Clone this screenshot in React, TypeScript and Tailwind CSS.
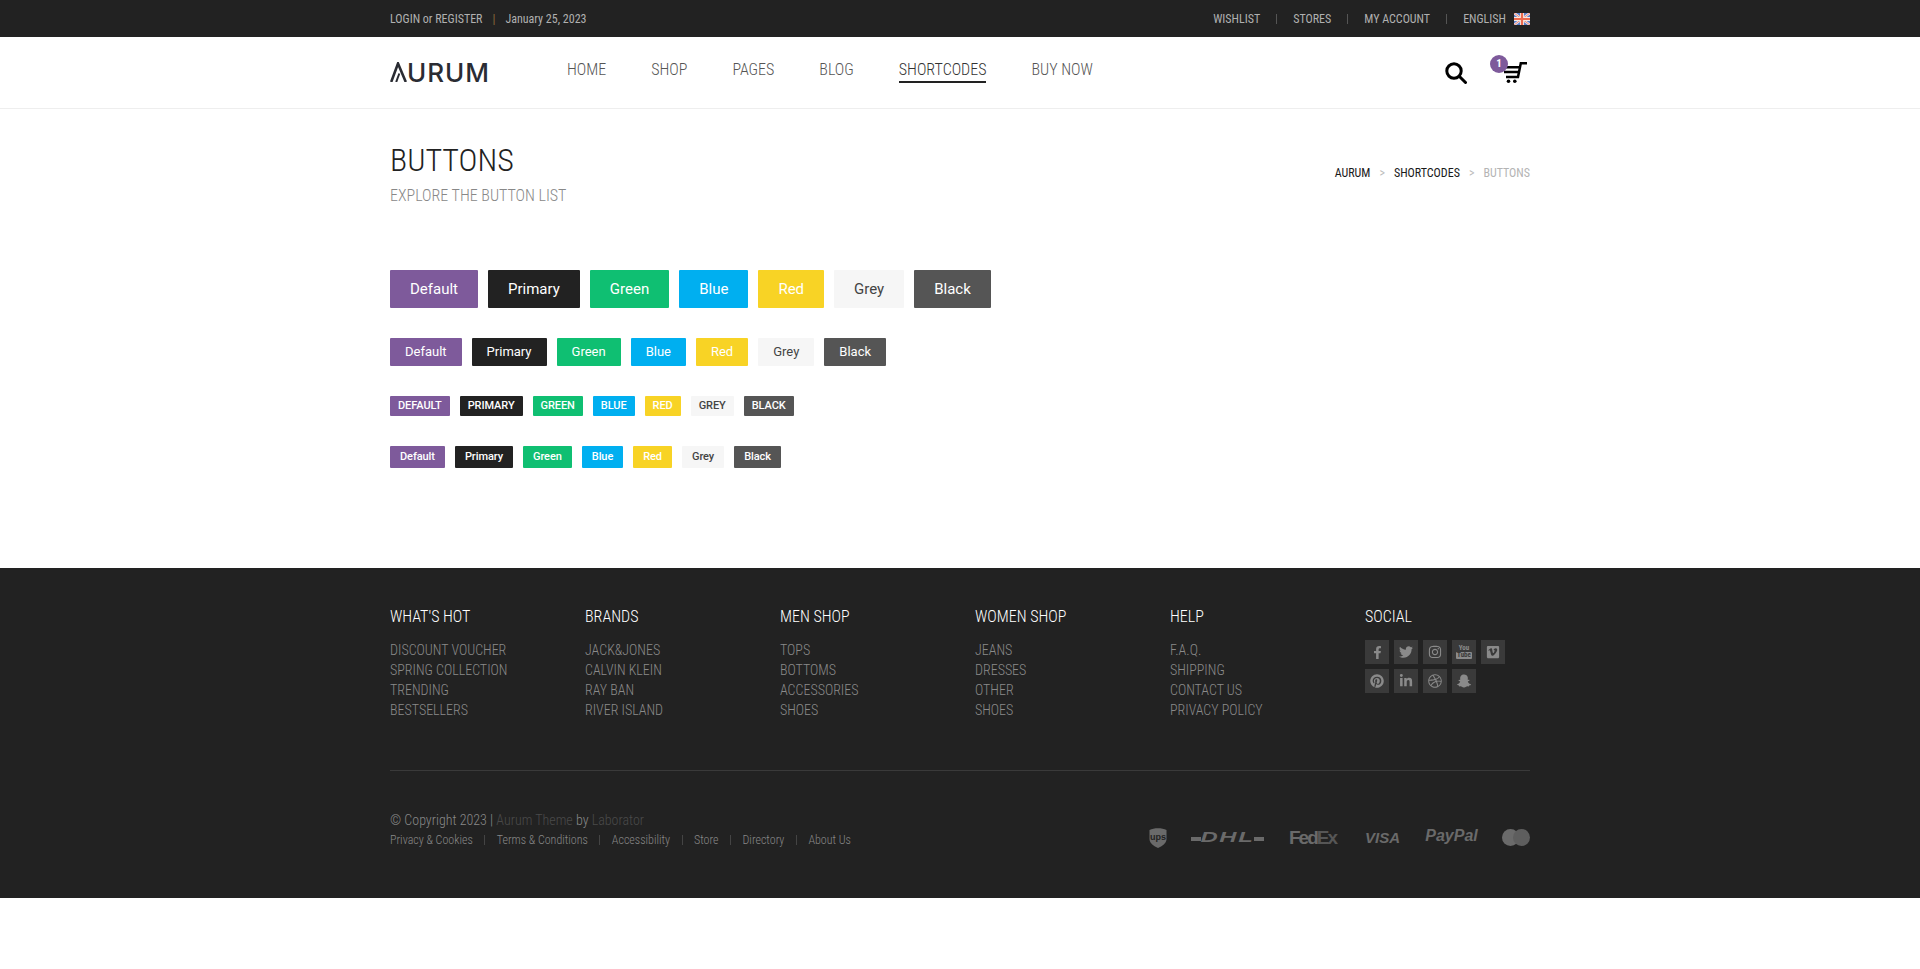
import { FaFacebookF, FaTwitter, FaInstagram, FaVimeo, FaPinterest, FaLinkedinIn, FaDribbble, FaSnapchatGhost } from 'react-icons/fa'

const cond = "font-['Roboto',sans-serif] [font-stretch:75%]"

type Btn = { label: string; cls: string }

const COLORS: Btn[] = [
  { label: 'Default', cls: 'bg-[#7e5a9b] text-white' },
  { label: 'Primary', cls: 'bg-[#222222] text-white' },
  { label: 'Green', cls: 'bg-[#0fbf72] text-white' },
  { label: 'Blue', cls: 'bg-[#00aff0] text-white' },
  { label: 'Red', cls: 'bg-[#f8d325] text-white' },
  { label: 'Grey', cls: 'bg-[#f6f6f6] text-[#444444]' },
  { label: 'Black', cls: 'bg-[#555555] text-white' },
]

const FOOTER = [
  { title: "WHAT'S HOT", links: ['DISCOUNT VOUCHER', 'SPRING COLLECTION', 'TRENDING', 'BESTSELLERS'] },
  { title: 'BRANDS', links: ['JACK&JONES', 'CALVIN KLEIN', 'RAY BAN', 'RIVER ISLAND'] },
  { title: 'MEN SHOP', links: ['TOPS', 'BOTTOMS', 'ACCESSORIES', 'SHOES'] },
  { title: 'WOMEN SHOP', links: ['JEANS', 'DRESSES', 'OTHER', 'SHOES'] },
  { title: 'HELP', links: ['F.A.Q.', 'SHIPPING', 'CONTACT US', 'PRIVACY POLICY'] },
]

function ButtonRow({ size, mt, upper }: { size: string; mt: string; upper?: boolean }) {
  return (
    <div className={`flex gap-[10px] ${mt}`}>
      {COLORS.map(b => (
        <div key={b.label} className={`flex items-center justify-center rounded-[1px] ${size} ${b.cls}`}>
          {upper ? b.label.toUpperCase() : b.label}
        </div>
      ))}
    </div>
  )
}

function Flag() {
  return (
    <svg width="16" height="12" viewBox="0 0 16 12" className="ml-[8px]">
      <rect width="16" height="12" fill="#5b7fc9" />
      <path d="M0 0L16 12M16 0L0 12" stroke="#f3e6e6" strokeWidth="2.4" />
      <path d="M0 0L16 12M16 0L0 12" stroke="#e8705f" strokeWidth="0.8" />
      <path d="M8 0V12M0 6H16" stroke="#f5e9e4" strokeWidth="4" />
      <path d="M8 0V12M0 6H16" stroke="#ee6a4e" strokeWidth="2.2" />
    </svg>
  )
}

function Cart() {
  return (
    <svg width="24" height="21" viewBox="0 0 24 21" fill="none" stroke="#000" strokeWidth="2.5" className="block">
      <path d="M24 1.2H17.8L15 15H3" />
      <path d="M0 5.2H16.5M1 10H15.5" />
      <circle cx="5.5" cy="19.2" r="1.8" fill="#000" stroke="none" />
      <circle cx="11.8" cy="19.2" r="1.8" fill="#000" stroke="none" />
    </svg>
  )
}

function YoutubeOld() {
  return (
    <div className="flex flex-col items-center font-['Roboto',sans-serif] text-[7px] font-bold leading-[7px] text-[#8a8a8a] [font-stretch:75%]">
      <span>You</span>
      <span className="rounded-[1px] bg-[#8a8a8a] px-[1px] text-[#3a3a3a]">Tube</span>
    </div>
  )
}

const SOCIAL = [
  <FaFacebookF key="fb" size={13} />,
  <FaTwitter key="tw" size={14} />,
  <FaInstagram key="ig" size={14} />,
  <YoutubeOld key="yt" />,
  <FaVimeo key="vi" size={14} />,
  <FaPinterest key="pi" size={14} />,
  <FaLinkedinIn key="li" size={14} />,
  <FaDribbble key="dr" size={14} />,
  <FaSnapchatGhost key="sc" size={14} />,
]

function PaymentLogos() {
  return (
    <div className="mt-[14px] flex h-[21px] items-center font-['Liberation_Sans',sans-serif] font-bold leading-none text-[#6a6a6a] [font-stretch:100%]">
      <svg width="18" height="21" viewBox="0 0 18 21">
        <path d="M0.5 3C5 0.5 13 0.5 17.5 3V12C17.5 16.5 13 19 9 21C5 19 0.5 16.5 0.5 12Z" fill="#6a6a6a" />
        <text x="9" y="13" textAnchor="middle" fontSize="9" fontWeight="700" fill="#222222">ups</text>
      </svg>
      <div className="ml-[24px] flex h-[10px] w-[73px] items-end">
        <span className="mb-[1px] h-[4px] w-[10px] bg-[#6a6a6a]" />
        <span className="flex-1 text-center text-[14px] italic leading-[10px] tracking-[1px] [transform:scaleX(1.7)]">DHL</span>
        <span className="mb-[1px] h-[4px] w-[10px] bg-[#6a6a6a]" />
      </div>
      <span className="ml-[25px] w-[45px] whitespace-nowrap text-[19px] tracking-[-2px]">Fed<span className="text-[#565656]">Ex</span></span>
      <span className="ml-[30px] w-[37px] text-center text-[15px] italic">VISA</span>
      <span className="ml-[24px] w-[53px] -translate-y-[1px] text-center text-[16px] italic">PayPal</span>
      <div className="ml-[24px] flex w-[28px] items-center">
        <span className="h-[17px] w-[17px] shrink-0 rounded-full bg-[#6a6a6a]" />
        <span className="-ml-[6px] h-[17px] w-[17px] shrink-0 rounded-full bg-[#5e5e5e]" />
      </div>
    </div>
  )
}

export default function App() {
  return (
    <div className={`min-h-[969px] bg-white ${cond}`}>
      <div className="h-[37px] bg-[#222222] text-[12px] text-[#b0b0b0]">
        <div className="mx-auto flex h-full w-[1140px] items-center justify-between">
          <div className="flex items-center">
            <span>LOGIN or REGISTER</span>
            <span className="mx-[10px] text-[#8a6d3b]">|</span>
            <span>January 25, 2023</span>
          </div>
          <div className="flex items-center">
            <span>WISHLIST</span>
            <span className="mx-[16px] h-[10px] w-px bg-[#555555]" />
            <span>STORES</span>
            <span className="mx-[16px] h-[10px] w-px bg-[#555555]" />
            <span>MY ACCOUNT</span>
            <span className="mx-[16px] h-[10px] w-px bg-[#555555]" />
            <span>ENGLISH</span>
            <Flag />
          </div>
        </div>
      </div>

      <div className="h-[72px] border-b border-[#eeeeee]">
        <div className="mx-auto flex h-[71px] w-[1140px] items-center">
          <div className="flex w-[177px] items-center" aria-label="AURUM">
            <svg width="17" height="20" viewBox="0 0 17 20" fill="none" stroke="#2a2c33" strokeWidth="2.6" className="-mt-[1px]">
              <path d="M1.2 20L8 1.5L15.8 20" />
              <path d="M6.2 20L9.3 11.5" strokeWidth="2" />
            </svg>
            <span className="font-['Inter',sans-serif] text-[26px] font-medium leading-none tracking-[1px] text-[#2a2c33] [font-stretch:100%]">URUM</span>
          </div>
          <nav className="-mt-[3px] flex gap-[45px] text-[16px] font-light leading-[20px] text-[#555555]">
            <span>HOME</span>
            <span>SHOP</span>
            <span>PAGES</span>
            <span>BLOG</span>
            <span className="border-b-2 border-[#222222] pb-px text-[#333333]">SHORTCODES</span>
            <span>BUY NOW</span>
          </nav>
          <div className="ml-auto flex items-center">
            <svg width="22" height="22" viewBox="0 0 22 22" fill="none" stroke="#000" strokeWidth="3">
              <circle cx="9" cy="9" r="7.2" />
              <path d="M14.5 14.5L20.5 20.5" strokeLinecap="round" />
            </svg>
            <div className="relative ml-[36px] mr-[3px]">
              <Cart />
              <span className="absolute -left-[13px] -top-[7px] flex h-[18px] w-[18px] items-center justify-center rounded-full bg-[#7e5a9b] text-[11px] font-bold text-white">1</span>
            </div>
          </div>
        </div>
      </div>

      <div className="mx-auto h-[459px] w-[1140px]">
        <div className="flex items-start justify-between pt-[32px]">
          <div>
            <h1 className="text-[32px] font-light leading-[38px] text-[#222222]">BUTTONS</h1>
            <p className="mt-[7px] text-[16px] font-light leading-[20px] text-[#888888]">EXPLORE THE BUTTON LIST</p>
          </div>
          <div className="mt-[24px] flex items-center text-[12px] font-[380] leading-[16px] text-[#1a1a1a]">
            <span>AURUM</span>
            <span className="mx-[9px] text-[#bbbbbb]">&gt;</span>
            <span>SHORTCODES</span>
            <span className="mx-[9px] text-[#bbbbbb]">&gt;</span>
            <span className="text-[#b4b4b4]">BUTTONS</span>
          </div>
        </div>
        <div className="font-['Roboto',sans-serif] [font-stretch:100%]">
          <ButtonRow size="h-[38px] px-[20px] text-[15px]" mt="mt-[64px]" />
          <ButtonRow size="h-[28px] px-[15px] text-[13px]" mt="mt-[30px]" />
          <ButtonRow size="h-[20px] px-[8px] text-[11px] font-medium tracking-[-0.08px]" mt="mt-[30px]" upper />
          <ButtonRow size="h-[22px] px-[10px] text-[11px] font-medium tracking-[-0.08px]" mt="mt-[30px]" />
        </div>
      </div>

      <footer className="h-[330px] bg-[#222222]">
        <div className="mx-auto w-[1140px] pt-[39px]">
          <div className="grid h-[164px] grid-cols-[195px_195px_195px_195px_195px_165px] border-b border-[#3a3a3a]">
            {FOOTER.map(col => (
              <div key={col.title}>
                <h4 className="text-[16px] font-light leading-[20px] text-white">{col.title}</h4>
                <ul className="mt-[13px] text-[14px] font-light leading-[20px] text-[#8a8a8a]">
                  {col.links.map(l => (
                    <li key={l}>{l}</li>
                  ))}
                </ul>
              </div>
            ))}
            <div>
              <h4 className="text-[16px] font-light leading-[20px] text-white">SOCIAL</h4>
              <div className="mt-[13px] grid grid-cols-[repeat(5,24px)] gap-[5px]">
                {SOCIAL.map((icon, i) => (
                  <div key={i} className="flex h-[24px] w-[24px] items-center justify-center bg-[#3a3a3a] text-[#8a8a8a]">
                    {icon}
                  </div>
                ))}
              </div>
            </div>
          </div>
          <div className="flex items-center justify-between pt-[39px]">
            <div className="font-light text-[#888888]">
              <div className="text-[14px] leading-[20px]">
                © Copyright 2023 | <span className="text-[#4a4a4a]">Aurum Theme</span> by <span className="text-[#4a4a4a]">Laborator</span>
              </div>
              <div className="flex items-center text-[12px] leading-[20px]">
                <span>Privacy &amp; Cookies</span>
                <span className="mx-[11.5px] h-[10px] w-px bg-[#444444]" />
                <span>Terms &amp; Conditions</span>
                <span className="mx-[11.5px] h-[10px] w-px bg-[#444444]" />
                <span>Accessibility</span>
                <span className="mx-[11.5px] h-[10px] w-px bg-[#444444]" />
                <span>Store</span>
                <span className="mx-[11.5px] h-[10px] w-px bg-[#444444]" />
                <span>Directory</span>
                <span className="mx-[11.5px] h-[10px] w-px bg-[#444444]" />
                <span>About Us</span>
              </div>
            </div>
            <PaymentLogos />
          </div>
        </div>
      </footer>
    </div>
  )
}
